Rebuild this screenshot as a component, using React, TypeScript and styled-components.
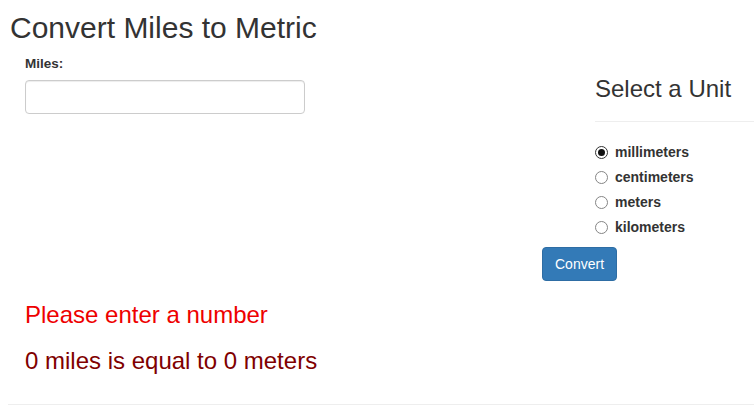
import React from "react";
import styled, { createGlobalStyle } from "styled-components";

const Global = createGlobalStyle`
  html, body { margin: 0; padding: 0; background: #fff; }
  body {
    font-family: "Liberation Sans", Arial, Helvetica, sans-serif;
    color: #333;
    font-size: 14px;
    line-height: 1.42857;
  }
  * { box-sizing: border-box; }
`;

const Page = styled.div`
  width: 754px;
  display: flex;
  flex-direction: column;
`;

const Title = styled.h2`
  margin: 11px 0 0 10px;
  font-size: 30px;
  line-height: 33px;
  font-weight: 400;
  color: #333;
`;

const FormRow = styled.div`
  display: flex;
  align-items: flex-start;
`;

const LeftCol = styled.div`
  flex: 1;
  padding-left: 25px;
  display: flex;
  flex-direction: column;
  align-items: flex-start;
`;

const FieldLabel = styled.label`
  margin-top: 11px;
  font-size: 13.5px;
  line-height: 18px;
  font-weight: 700;
  color: #333;
`;

const TextInput = styled.input`
  margin-top: 7px;
  width: 280px;
  height: 34px;
  border: 1px solid #ccc;
  border-radius: 4px;
  padding: 6px 12px;
  font-size: 14px;
  font-family: inherit;
  box-shadow: inset 0 1px 1px rgba(0, 0, 0, 0.075);
  outline: none;
`;

const RightCol = styled.div`
  width: 212px;
  display: flex;
  flex-direction: column;
  align-items: flex-start;
`;

const UnitBlock = styled.div`
  align-self: stretch;
  padding-left: 53px;
  display: flex;
  flex-direction: column;
`;

const UnitHeading = styled.h3`
  margin: 31.5px 0 0 0;
  font-size: 24px;
  line-height: 26.4px;
  font-weight: 400;
  color: #333;
`;

const Rule = styled.hr`
  margin: 19px 0 0 0;
  border: 0;
  border-top: 1px solid #eee;
  width: 100%;
`;

const RadioList = styled.div`
  margin-top: 18.5px;
  display: flex;
  flex-direction: column;
`;

const RadioRow = styled.label`
  height: 25px;
  display: flex;
  align-items: center;
  gap: 7px;
  font-size: 14px;
  font-weight: 700;
  color: #333;
`;

const RadioDot = styled.span<{ $checked?: boolean }>`
  width: 13px;
  height: 13px;
  border-radius: 50%;
  border: 1px solid ${(p) => (p.$checked ? "#333" : "#858585")};
  display: flex;
  align-items: center;
  justify-content: center;
  background: #fff;
  &::after {
    content: "";
    width: 7px;
    height: 7px;
    border-radius: 50%;
    background: ${(p) => (p.$checked ? "#111" : "transparent")};
  }
`;

const ConvertButton = styled.button`
  margin-top: 6.5px;
  height: 34px;
  padding: 6px 12px;
  font-family: inherit;
  font-size: 14px;
  line-height: 20px;
  color: #fff;
  background: #337ab7;
  border: 1px solid #2e6da4;
  border-radius: 4px;
`;

const Message = styled.p<{ $tone: "error" | "result" }>`
  margin: 0;
  padding-left: 25px;
  font-size: 24px;
  line-height: 26.4px;
  color: ${(p) => (p.$tone === "error" ? "#ee0000" : "#800000")};
`;

const Messages = styled.div`
  margin-top: 21.5px;
  display: flex;
  flex-direction: column;
  gap: 19.6px;
`;

const BottomRule = styled.hr`
  margin: 29px 0 0 8px;
  border: 0;
  border-top: 1px solid #eee;
`;

const units = ["millimeters", "centimeters", "meters", "kilometers"];

export default function App() {
  return (
    <>
      <Global />
      <Page>
        <Title>Convert Miles to Metric</Title>
        <FormRow>
          <LeftCol>
            <FieldLabel htmlFor="miles">Miles:</FieldLabel>
            <TextInput id="miles" type="text" />
          </LeftCol>
          <RightCol>
            <UnitBlock>
              <UnitHeading>Select a Unit</UnitHeading>
              <Rule />
              <RadioList>
                {units.map((u, i) => (
                  <RadioRow key={u}>
                    <RadioDot $checked={i === 0} />
                    {u}
                  </RadioRow>
                ))}
              </RadioList>
            </UnitBlock>
            <ConvertButton>Convert</ConvertButton>
          </RightCol>
        </FormRow>
        <Messages>
          <Message $tone="error">Please enter a number</Message>
          <Message $tone="result">0 miles is equal to 0 meters</Message>
        </Messages>
        <BottomRule />
      </Page>
    </>
  );
}
